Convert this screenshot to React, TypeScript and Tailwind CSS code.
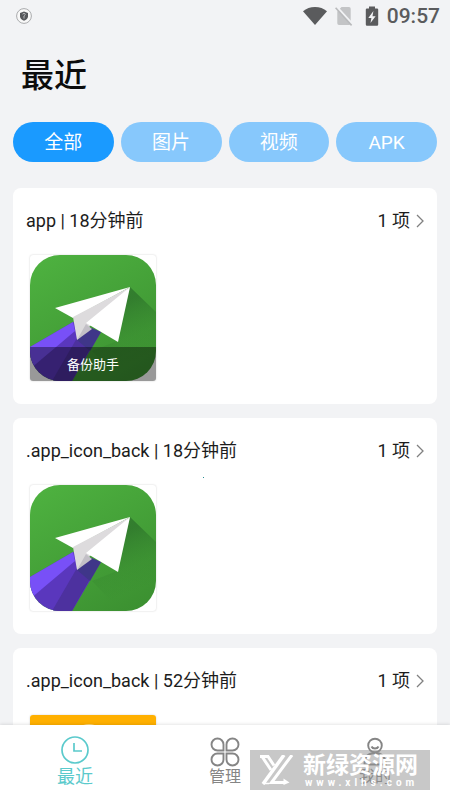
import React from "react";

const sans = "font-['Roboto','Noto_Sans_CJK_SC',sans-serif]";

function StatusBar() {
  return (
    <header className="flex h-8 shrink-0 items-center justify-between pr-2.5 pl-4 text-[#5a5b5d]">
      <svg viewBox="0 0 16 16" className="size-4" aria-hidden="true">
        <circle cx="8" cy="8" r="7.4" fill="#f8f8f8" stroke="#a2a3a5" strokeWidth="0.9" />
        <path d="M8 3.6 12 4.9v3.4c0 2-1.6 3.5-4 4.5-2.4-1-4-2.5-4-4.5V4.9Z" fill="#55575b" />
        <path d="M8 10.6V8M6.800 6.500a1.200 1.200 0 1 1 2.400 0c0 .8-1.200.9-1.200 1.800" fill="none" stroke="#c9cacc" strokeWidth="0.8" />
      </svg>
      <div className="flex items-center">
        <svg viewBox="0 0 24 20" className="h-5 w-6" aria-hidden="true">
          <path d="M0 5.200C3.300 2.500 7.400 1 12 1s8.700 1.500 12 4.200L12 19Z" fill="currentColor" />
        </svg>
        <svg viewBox="0 0 18 20" className="ml-2 h-5 w-[18px]" aria-hidden="true">
          <path d="M6.500 1H14a1.700 1.700 0 0 1 1.700 1.700V17.300A1.700 1.700 0 0 1 14 19H4a1.700 1.700 0 0 1-1.700-1.700V5.500Z" fill="#c3c4c6" />
          <path d="M1.700 1 17.500 18.500" stroke="#f2f3f5" strokeWidth="2.600" />
          <path d="M.6 1.800 16.600 19.400" stroke="#b9babc" strokeWidth="1.600" />
        </svg>
        <svg viewBox="0 0 14 20" className="ml-3 h-5 w-3.5" aria-hidden="true">
          <path d="M4 .4h6v2h2a1.200 1.200 0 0 1 1.200 1.200v15a1.200 1.200 0 0 1-1.200 1.200H2A1.200 1.200 0 0 1 .8 18.600v-15A1.200 1.200 0 0 1 2 2.400h2Z" fill="currentColor" />
          <path d="M8.400 5 3.300 12h3.100l-.9 5L10.600 10.300H7.500Z" fill="#f2f3f5" />
        </svg>
        <time className="ml-2 text-[21px] leading-8 font-medium">09:57</time>
      </div>
    </header>
  );
}

function PlaneIcon({ id }: { id: string }) {
  return (
    <svg viewBox="0 0 126 126" className="block size-full" aria-hidden="true">
      <defs>
        <linearGradient id={`${id}-green`} x1="0.2" y1="0" x2="0.8" y2="1">
          <stop offset="0" stopColor="#4db03f" />
          <stop offset="1" stopColor="#3c9131" />
        </linearGradient>
        <linearGradient id={`${id}-shade`} gradientUnits="userSpaceOnUse" x1="98" y1="45" x2="120" y2="100">
          <stop offset="0" stopColor="#2b6f2a" stopOpacity="0.7" />
          <stop offset="0.6" stopColor="#2f7a2a" stopOpacity="0.2" />
          <stop offset="1" stopColor="#2f7a2a" stopOpacity="0" />
        </linearGradient>
        <clipPath id={`${id}-clip`}>
          <rect width="126" height="126" rx="30" />
        </clipPath>
      </defs>
      <g clipPath={`url(#${id}-clip)`}>
        <rect width="126" height="126" fill={`url(#${id}-green)`} />
        <path d="M100 32 126 57v69H90L62 96l25-10Z" fill={`url(#${id}-shade)`} />
        <path d="M43 67 0 92v34h42L71 77Z" fill="#5a37bd" />
        <path d="M43 67 0 92v22l45-38Z" fill="#7850f7" />
        <path d="M47 83 22 126h20L60 94Z" fill="#4d319f" />
        <path d="M47 85 57 71 71 77 60 96Z" fill="#3f3689" />
        <path d="M100 32 25 53 43 63Z" fill="#fff" />
        <path d="M100 32 43 62 47 85 60 71Z" fill="#dddbdd" />
        <path d="M47 85 62 74 56 69Z" fill="#c2bfc6" />
        <path d="M100 32 56 68 88 87Z" fill="#fff" />
      </g>
    </svg>
  );
}

function OrangeIcon() {
  return (
    <svg viewBox="0 0 126 126" className="block size-full" aria-hidden="true">
      <rect width="126" height="126" fill="#ffb000" />
      <circle cx="59" cy="25" r="16" fill="#ffd778" />
    </svg>
  );
}

type CardProps = {
  title: string;
  caption?: string;
  children: React.ReactNode;
};

function RecentCard({ title, caption, children }: CardProps) {
  return (
    <section className="rounded-lg bg-white px-[13px] pt-[17px] pb-[23px]">
      <div className="flex h-8 items-center justify-between text-[18px] leading-8 text-[#1c1c1c]">
        <h2>{title}</h2>
        <button type="button" className="flex items-center gap-1.5">
          <span>1 项</span>
          <svg viewBox="0 0 8 14" className="h-3.5 w-2" aria-hidden="true">
            <path d="M1 1 7 7 1 13" fill="none" stroke="#808080" strokeWidth="1.300" />
          </svg>
        </button>
      </div>
      <div className="relative mt-[18px] ml-1 size-[126px] overflow-hidden rounded-[3px] bg-white shadow-[0_0_2px_rgba(0,0,0,0.2)]">
        {children}
        {caption && (
          <p className="absolute inset-x-0 bottom-0 bg-black/40 pt-0.5 text-center text-[13px] leading-8 text-white">
            {caption}
          </p>
        )}
      </div>
    </section>
  );
}

function Watermark() {
  return (
    <div className="absolute right-5 bottom-2.5 flex h-10 w-[180px] items-center bg-[#919191]/50 pl-2.5 text-white">
      <svg viewBox="0 0 34 30" className="h-[30px] w-[34px] shrink-0" aria-hidden="true">
        <g fill="none" stroke="currentColor" strokeWidth="3">
          <path d="M0 1.500H8L14 10.500" />
          <path d="M2 1.500 11 15" />
          <path d="M24 0 3 29" strokeWidth="3.500" />
          <path d="M32 0 11.500 27.500H26" />
          <path d="M3 28.500 9 28.500" strokeWidth="1.500" />
        </g>
        <path d="m23.500 23.500 6 4-6 2.500Z" fill="currentColor" />
      </svg>
      <div className="ml-[9px] flex flex-col pt-0.5">
        <span className="text-[23px] leading-6 font-bold">新绿资源网</span>
        <span className="pl-0.5 text-[10px] leading-2.5 font-bold tracking-[4px]">www.xlhs.com</span>
      </div>
    </div>
  );
}

const filters = ["全部", "图片", "视频", "APK"];

export default function App() {
  return (
    <div className={`relative flex h-screen flex-col overflow-hidden bg-[#f2f3f5] ${sans}`}>
      <StatusBar />
      <main className="min-h-0 flex-1 overflow-y-auto px-[13px] [scrollbar-width:none]">
        <h1 className="mt-[18px] pl-2 text-[33px] leading-[52px] font-medium text-[#0c0c0c]">最近</h1>
        <div className="mt-5 flex gap-[7px]">
          {filters.map((name, i) => (
            <button
              key={name}
              type="button"
              aria-pressed={i === 0}
              className={`h-10 flex-1 rounded-full pt-0.5 text-[19px] leading-[38px] text-white ${i === 0 ? "bg-[#1a9aff]" : "bg-[#87c8fc]"}`}
            >
              {name}
            </button>
          ))}
        </div>
        <div className="mt-[26px] flex flex-col gap-3.5">
          <RecentCard title="app | 18分钟前" caption="备份助手">
            <PlaneIcon id="first" />
          </RecentCard>
          <RecentCard title=".app_icon_back | 18分钟前">
            <PlaneIcon id="second" />
          </RecentCard>
          <RecentCard title=".app_icon_back | 52分钟前">
            <OrangeIcon />
          </RecentCard>
        </div>
      </main>
      <nav className="relative grid h-[75px] shrink-0 grid-cols-3 bg-white text-[#858585] shadow-[0_-1px_3px_rgba(0,0,0,0.1)]">
        <button type="button" className="flex flex-col items-center pt-[11px] text-[#5bcacc]">
          <svg viewBox="0 0 28 28" className="size-7" fill="none" stroke="currentColor" strokeWidth="1.700" aria-hidden="true">
            <circle cx="14" cy="14" r="13" />
            <path d="M13 7v8h8" />
          </svg>
          <span className="text-[18px] leading-[26px]">最近</span>
        </button>
        <button type="button" className="flex flex-col items-center pt-3">
          <svg viewBox="0 0 30 30" className="size-[30px]" fill="none" stroke="currentColor" strokeWidth="1.900" aria-hidden="true">
            <path d="M7.500 1.500a6 6 0 0 1 6 6v6h-6a6 6 0 0 1 0-12Z" />
            <path d="M22.500 1.500a6 6 0 0 1 0 12h-6v-6a6 6 0 0 1 6-6Z" />
            <path d="M7.500 16.500h6v6a6 6 0 1 1-6-6Z" />
            <path d="M16.500 16.500h6a6 6 0 1 1-6 6Z" />
          </svg>
          <span className="text-[16px] leading-5">管理</span>
        </button>
        <button type="button" className="flex flex-col items-center pt-3">
          <svg viewBox="0 0 30 30" className="size-[30px]" fill="none" stroke="currentColor" strokeWidth="1.900" aria-hidden="true">
            <circle cx="15" cy="8.500" r="6.800" />
            <path d="M11.500 9.500c1.200 2.600 5.800 2.600 7 0" />
            <path d="M4.500 27.500c0-7.500 4-11.500 10.500-11.500S25.500 20 25.500 27.500Z" />
          </svg>
          <span className="text-[16px] leading-5">我的</span>
        </button>
        <Watermark />
      </nav>
      <span className="absolute top-[477px] left-[203px] size-px bg-[#2a8f94]" aria-hidden="true" />
    </div>
  );
}
